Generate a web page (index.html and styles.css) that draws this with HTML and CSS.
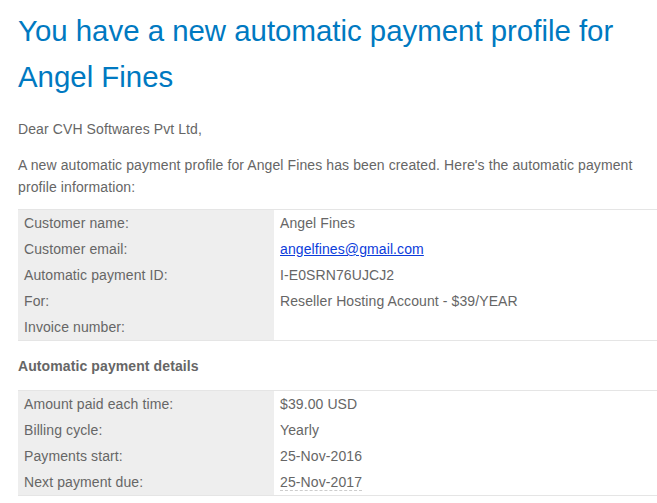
FILE: index.html
```html
<!DOCTYPE html>
<html>
<head>
<meta charset="utf-8">
<link rel="stylesheet" href="styles.css">
</head>
<body>
<div class="mail">
  <h1 class="title">You have a new automatic payment profile for Angel Fines</h1>
  <p class="text greet">Dear CVH Softwares Pvt Ltd,</p>
  <p class="text">A new automatic payment profile for Angel Fines has been created. Here's the automatic payment profile information:</p>
  <table class="info">
    <tr><td class="label">Customer name:</td><td class="value">Angel Fines</td></tr>
    <tr><td class="label">Customer email:</td><td class="value"><a class="link" href="#">angelfines@gmail.com</a></td></tr>
    <tr><td class="label">Automatic payment ID:</td><td class="value">I-E0SRN76UJCJ2</td></tr>
    <tr><td class="label">For:</td><td class="value">Reseller Hosting Account - $39/YEAR</td></tr>
    <tr><td class="label">Invoice number:</td><td class="value"></td></tr>
  </table>
  <h2 class="section">Automatic payment details</h2>
  <table class="info">
    <tr><td class="label">Amount paid each time:</td><td class="value">$39.00 USD</td></tr>
    <tr><td class="label">Billing cycle:</td><td class="value">Yearly</td></tr>
    <tr><td class="label">Payments start:</td><td class="value">25-Nov-2016</td></tr>
    <tr><td class="label">Next payment due:</td><td class="value"><span class="date">25-Nov-2017</span></td></tr>
  </table>
</div>
</body>
</html>
```
FILE: styles.css
```css
html, body {
  margin: 0;
  padding: 0;
  background: #ffffff;
}
.mail {
  padding: 8px 0 0 18px;
  font-family: "Liberation Sans", Arial, sans-serif;
  color: #666666;
}
.title {
  margin: 0;
  font-size: 29.4px;
  line-height: 46px;
  font-weight: normal;
  color: #0079c1;
}
.text {
  margin: 0;
  font-size: 14px;
  line-height: 22px;
  letter-spacing: 0.1px;
}
.greet {
  margin-top: 18px;
  margin-bottom: 14px;
}
.info {
  width: 100%;
  border-collapse: collapse;
  margin-top: 11px;
  border-top: 1px solid #e5e5e5;
  border-bottom: 1px solid #e5e5e5;
  font-size: 14px;
  letter-spacing: 0.1px;
}
.info td {
  height: 26px;
  padding: 0 6px;
  vertical-align: middle;
}
.label {
  width: 244px;
  background: #eeeeee;
}
.link {
  color: #0b3cdb;
}
.date {
  border-bottom: 1px dashed #cccccc;
}
.section {
  margin: 0;
  height: 49px;
  display: flex;
  align-items: center;
  font-size: 14px;
  font-weight: bold;
  color: #666666;
  letter-spacing: 0.1px;
}
.section + .info {
  margin-top: 0;
}
```
